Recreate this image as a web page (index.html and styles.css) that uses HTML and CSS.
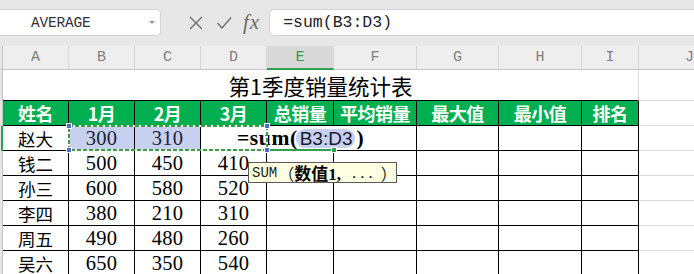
FILE: index.html
```html
<!DOCTYPE html>
<html lang="zh">
<head>
<meta charset="utf-8">
<title>第1季度销量统计表</title>
<link rel="stylesheet" href="styles.css">
</head>
<body>
<div class="app">
  <div class="toolbar">
    <div class="namebox"><span class="name">AVERAGE</span><span class="caret"></span></div>
    <div class="fbtns">
      <svg class="ico" width="16" height="16" viewBox="0 0 16 16"><path d="M2 2 L14 14 M14 2 L2 14" stroke="#6b6b6b" stroke-width="1.3" fill="none"/></svg>
      <svg class="ico" width="16" height="16" viewBox="0 0 16 16"><path d="M1.5 8 L6 13 L15 2.5" stroke="#6b6b6b" stroke-width="1.3" fill="none"/></svg>
      <span class="fx">fx</span>
    </div>
    <div class="formula">=sum(B3:D3)</div>
  </div>

  <div class="sheet">
    <div class="stub sh"></div>
    <div class="h">A</div><div class="h">B</div><div class="h">C</div><div class="h">D</div><div class="h sel">E</div><div class="h">F</div><div class="h">G</div><div class="h">H</div><div class="h">I</div><div class="h last">J</div>

    <div class="stub"></div>
    <div class="title">第1季度销量统计表</div>
    <div class="j"></div>

    <div class="stub st"></div>
    <div class="hd">姓名</div><div class="hd">1月</div><div class="hd">2月</div><div class="hd">3月</div><div class="hd">总销量</div><div class="hd">平均销量</div><div class="hd">最大值</div><div class="hd">最小值</div><div class="hd">排名</div>
    <div class="j"></div>

    <div class="stub st act"></div>
    <div class="d nm">赵大</div><div class="d num rng">300</div><div class="d num rng">310</div><div class="d num"></div><div class="d"></div><div class="d"></div><div class="d"></div><div class="d"></div><div class="d"></div>
    <div class="j"></div>

    <div class="stub st"></div>
    <div class="d nm">钱二</div><div class="d num">500</div><div class="d num">450</div><div class="d num">410</div><div class="d"></div><div class="d"></div><div class="d"></div><div class="d"></div><div class="d"></div>
    <div class="j"></div>

    <div class="stub st"></div>
    <div class="d nm">孙三</div><div class="d num">600</div><div class="d num">580</div><div class="d num">520</div><div class="d"></div><div class="d"></div><div class="d"></div><div class="d"></div><div class="d"></div>
    <div class="j"></div>

    <div class="stub st"></div>
    <div class="d nm">李四</div><div class="d num">380</div><div class="d num">210</div><div class="d num">310</div><div class="d"></div><div class="d"></div><div class="d"></div><div class="d"></div><div class="d"></div>
    <div class="j"></div>

    <div class="stub st"></div>
    <div class="d nm">周五</div><div class="d num">490</div><div class="d num">480</div><div class="d num">260</div><div class="d"></div><div class="d"></div><div class="d"></div><div class="d"></div><div class="d"></div>
    <div class="j"></div>

    <div class="stub st"></div>
    <div class="d nm">吴六</div><div class="d num">650</div><div class="d num">350</div><div class="d num">540</div><div class="d"></div><div class="d"></div><div class="d"></div><div class="d"></div><div class="d"></div>
    <div class="j"></div>
  </div>

  <div class="editor"><span class="eq">=sum(</span><span class="ref">B3:D3</span><span class="eq">)</span></div>
  <div class="activebar"></div>
  <div class="fillhandle"></div>
  <svg class="range" width="204" height="30" viewBox="0 0 204 30">
    <rect x="3" y="3" width="198" height="24" fill="none" stroke="#ffffff" stroke-width="2"/>
    <rect x="3" y="3" width="198" height="24" fill="none" stroke="#3f9a45" stroke-width="2" stroke-dasharray="4 2"/>
    <rect x="0.5" y="0.5" width="5" height="5" fill="#4a6cc4" stroke="#ffffff" stroke-width="1"/>
    <rect x="198.5" y="0.5" width="5" height="5" fill="#4a6cc4" stroke="#ffffff" stroke-width="1"/>
    <rect x="0.5" y="24.5" width="5" height="5" fill="#4a6cc4" stroke="#ffffff" stroke-width="1"/>
    <rect x="198.5" y="24.5" width="5" height="5" fill="#4a6cc4" stroke="#ffffff" stroke-width="1"/>
  </svg>
  <div class="tip"><span class="tm">SUM</span><span class="tc lp">（</span><b class="tb">数值1,</b><span class="dots">...</span><span class="tc rp">）</span></div>
</div>
</body>
</html>
```

FILE: styles.css
```css
* { box-sizing: border-box; margin: 0; padding: 0; }
html, body { width: 694px; height: 274px; overflow: hidden; background: #ffffff; }
body { font-family: "Liberation Serif", "Noto Sans CJK SC", serif; color: #000; }

.app { position: relative; width: 694px; height: 274px; overflow: hidden; }

/* toolbar */
.toolbar {
  height: 46px;
  background: #e7e7e7;
  display: flex;
  align-items: flex-start;
  padding-top: 9px;
}
.namebox {
  width: 161px;
  height: 27px;
  background: #ffffff;
  border: 1px solid #d4d4d4;
  border-left: none;
  border-radius: 0 5px 5px 0;
  display: flex;
  align-items: center;
  padding-left: 31px;
}
.name {
  font-family: "Liberation Mono", monospace;
  font-size: 14.5px;
  color: #333;
  flex: 1;
  letter-spacing: -0.2px;
}
.caret {
  width: 0; height: 0;
  border-left: 3px solid transparent;
  border-right: 3px solid transparent;
  border-top: 3px solid #9a9a9a;
  margin-right: 5px;
}
.fbtns {
  display: flex;
  align-items: center;
  height: 27px;
  padding-left: 27px;
  gap: 12px;
}
.ico { display: block; }
.fx {
  font-family: "Liberation Serif", serif;
  font-style: italic;
  font-size: 21px;
  color: #6b6b6b;
  margin-left: -1px;
  letter-spacing: 1px;
}
.formula {
  flex: 1;
  margin-left: 9px;
  height: 27px;
  background: #ffffff;
  border: 1px solid #d4d4d4;
  border-right: none;
  border-radius: 5px 0 0 5px;
  padding-left: 13px;
  font-family: "Liberation Mono", monospace;
  font-size: 16.5px;
  line-height: 25px;
  color: #222;
}

/* sheet grid */
.sheet {
  display: grid;
  grid-template-columns: 3px 66px 66px 66px 66px 67px 83px 82px 83px 57px 1fr;
  grid-template-rows: 24px 31px 25px repeat(6, 25px);
}
.stub { background: #e6e6e6; border-right: 1px solid #c4c4c4; }
.stub.sh { border-bottom: 1px solid #c6c6c6; }
.stub.act { border-right: 2px solid #2f9e4f; }

.h {
  background: #eeeeee;
  border-right: 1px solid #d6d6d6;
  border-bottom: 1px solid #c6c6c6;
  font-family: "Liberation Mono", monospace;
  font-size: 15px;
  color: #808080;
  display: flex;
  align-items: center;
  justify-content: center;
}
.h.sel {
  background: #d9d9d9;
  color: #2f9e4f;
  border-bottom: 2px solid #2f9e4f;
}
.h.last { border-right: none; justify-content: flex-start; padding-left: 46px; }

.title {
  grid-column: span 9;
  border-right: 1px solid #d9d9d9;
  border-bottom: 1px solid #000;
  display: flex;
  align-items: center;
  justify-content: center;
  font-family: "Noto Sans CJK SC", sans-serif;
  font-size: 21.5px;
  padding-top: 1px;
}
.j { border-bottom: 1px solid #d9d9d9; }

.hd {
  background: #00b050;
  border-right: 1px solid #000;
  border-bottom: 1px solid #000;
  color: #ffffff;
  font-family: "Noto Sans CJK SC", sans-serif;
  font-weight: 700;
  font-size: 18px;
  display: flex;
  align-items: center;
  justify-content: center;
  white-space: nowrap;
  letter-spacing: -0.5px;
}

.d {
  border-right: 1px solid #000;
  border-bottom: 1px solid #000;
  display: flex;
  align-items: center;
  justify-content: center;
}
.nm {
  font-family: "Noto Sans CJK SC", sans-serif;
  font-size: 17.5px;
}
.num {
  font-family: "Liberation Serif", serif;
  font-size: 20.5px;
  letter-spacing: 0.3px;
  padding-top: 1px;
}
.rng { background: #c7d1ef; color: #1f1f3a; }

/* overlays */
.editor {
  position: absolute;
  left: 202px;
  top: 126px;
  width: 214px;
  height: 24px;
  background: #ffffff;
  padding-left: 35px;
  display: flex;
  align-items: center;
  white-space: nowrap;
}
.eq {
  font-family: "Liberation Serif", serif;
  font-weight: 700;
  font-size: 21.5px;
  letter-spacing: 0.6px;
}
.ref {
  font-family: "Liberation Sans", sans-serif;
  font-size: 19px;
  color: #1a1a2a;
  background: #c7d1ef;
  border-radius: 9px;
  padding: 0 3px 0 4px;
  height: 19px;
  line-height: 19px;
  margin: 0 1px 0 -2px;
}
.activebar {
  position: absolute;
  left: 267px;
  top: 149px;
  width: 67px;
  height: 2px;
  background: #2f9e4f;
}
.fillhandle {
  position: absolute;
  left: 331px;
  top: 147px;
  width: 6px;
  height: 6px;
  background: #2f9e4f;
  border: 1px solid #ffffff;
}
.range {
  position: absolute;
  left: 66px;
  top: 123px;
}
.tip {
  position: absolute;
  left: 248px;
  top: 162px;
  width: 149px;
  height: 21px;
  background: #ffffe1;
  border: 1px solid #5a5a5a;
  display: flex;
  align-items: center;
  padding-left: 3px;
  white-space: nowrap;
}
.tm { font-family: "Liberation Mono", monospace; font-size: 14px; color: #222; }
.tc { font-family: "Noto Sans CJK SC", sans-serif; font-size: 16px; color: #222; }
.tc.lp { margin-left: 1px; }
.tc.rp { margin-left: 4px; }
.tb { font-family: "Liberation Serif", "Noto Sans CJK SC", serif; font-size: 17px; font-weight: 700; }
.dots { font-family: "Liberation Serif", serif; font-size: 17px; letter-spacing: 4px; color: #222; margin-left: 11px; }
```
